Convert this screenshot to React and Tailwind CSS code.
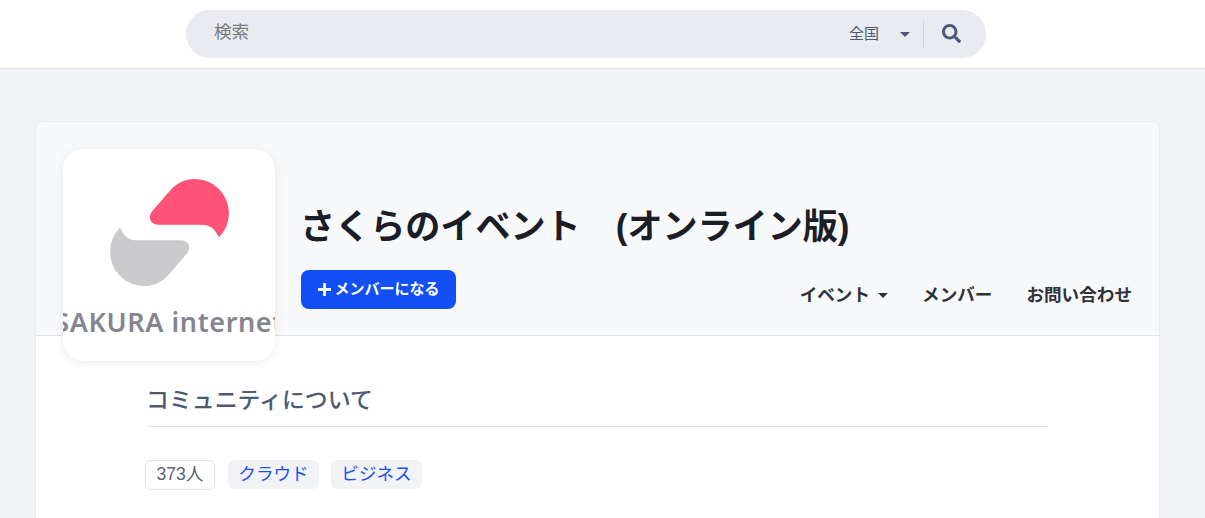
import { FaSearch, FaPlus } from "react-icons/fa";

const font = { fontFamily: '"Liberation Sans", "Noto Sans CJK JP", sans-serif' };

function Caret({ className }) {
  return <span className={"inline-block border-x-[5px] border-t-[5px] border-x-transparent " + className} />;
}

function SakuraLogo() {
  return (
    <div className="relative w-[212px] h-[212px] shrink-0 -mb-[26px] bg-white rounded-[20px] shadow-[0_2px_10px_rgba(0,0,0,0.08)] overflow-hidden flex flex-col items-center z-10">
      <svg viewBox="242 190 356 321" className="w-[119px] h-[107px] mt-[30px] shrink-0">
        <path
          fill="#ff5277"
          d="M568 365C556 338 542 327 515 327L385 327C363 327 353 304 368 287L420 227C440 203 465 190 495 190C552 190 598 235 598 292C598 322 588 345 568 365Z"
        />
        <path
          fill="#cbcbcd"
          transform="rotate(180 420 350.5)"
          d="M568 365C556 338 542 327 515 327L385 327C363 327 353 304 368 287L420 227C440 203 465 190 495 190C552 190 598 235 598 292C598 322 588 345 568 365Z"
        />
      </svg>
      <div className="mt-[20px] flex w-full justify-center">
        <span className="shrink-0 whitespace-nowrap text-[27px] leading-[32px] font-semibold text-[#85858f] tracking-[0.6px] font-['Noto_Sans',sans-serif]">
          SAKURA internet
        </span>
      </div>
    </div>
  );
}

export default function App() {
  return (
    <div className="h-screen overflow-hidden bg-[#f1f3f7]" style={font}>
      {/* search */}
      <header className="h-[69px] bg-white border-b border-[#e3e5ea] pl-[186px] pt-[10px]">
        <div className="w-[800px] h-[48px] rounded-[24px] bg-[#e9ebf0] flex items-center pl-[28px] pr-[25px]">
          <span className="flex-1 text-[17.6px] text-[#777a80] -mt-[3px]">検索</span>
          <span className="text-[15px] text-[#4f5b73]">全国</span>
          <Caret className="ml-[21px] border-t-[#4a5672]" />
          <span className="ml-[13px] mr-[18px] h-[28px] w-px bg-[#d3d5da]" />
          <FaSearch className="text-[#4a5a7a] text-[19px] -mt-[2px]" />
        </div>
      </header>

      {/* community */}
      <div className="pl-[35px] pr-[45px] pt-[52px]">
        <div className="bg-white border border-[#e9ebf0] rounded-lg">
          <div className="h-[214px] bg-[#f8f9fb] border-b border-[#e3e5ea] rounded-t-lg flex pl-[27px] pt-[27px]">
            <SakuraLogo />
            <div className="flex-1 pl-[26px] pr-[27px] pt-[56px]">
              <h1 className="text-[35.1px] leading-[44px] -ml-px font-bold text-[#1b1e26] whitespace-nowrap">
                さくらのイベント　(オンライン版)
              </h1>
              <div className="flex justify-between items-start mt-[21px]">
                <button className="h-[39px] w-[155px] bg-[#1250f5] text-white rounded-[8px] flex items-center justify-center gap-[2px] text-[15px] font-bold">
                  <FaPlus className="text-[15px]" />
                  メンバーになる
                </button>
                <nav className="flex items-center gap-[34px] mt-[12px] text-[17.6px] font-bold text-[#2f323a]">
                  <span className="flex items-center gap-[8px]">
                    イベント
                    <Caret className="border-t-[#2f323a]" />
                  </span>
                  <span>メンバー</span>
                  <span>お問い合わせ</span>
                </nav>
              </div>
            </div>
          </div>

          <div className="pl-[112px] w-[1012px] pt-[48px]">
            <h2 className="text-[22.9px] leading-[32px] -indent-[2px] font-medium text-[#4d5a76] pb-[10px] border-b border-[#e3e5ea]">
              コミュニティについて
            </h2>
            <div className="flex gap-[13px] mt-[33px] -ml-[3px] text-[17.6px] leading-[24px]">
              <span className="h-[30px] w-[70px] pb-[2px] flex items-center justify-center rounded-[6px] bg-white border border-[#dfe2ea] text-[#5b6478]">
                373人
              </span>
              <span className="h-[29px] w-[91px] pb-[2px] flex items-center justify-center rounded-[6px] bg-[#f1f3f7] text-[#1e50f0]">
                クラウド
              </span>
              <span className="h-[29px] w-[91px] pb-[2px] -ml-px flex items-center justify-center rounded-[6px] bg-[#f1f3f7] text-[#1e50f0]">
                ビジネス
              </span>
            </div>
          </div>
          <div className="h-[120px]" />
        </div>
      </div>
    </div>
  );
}
